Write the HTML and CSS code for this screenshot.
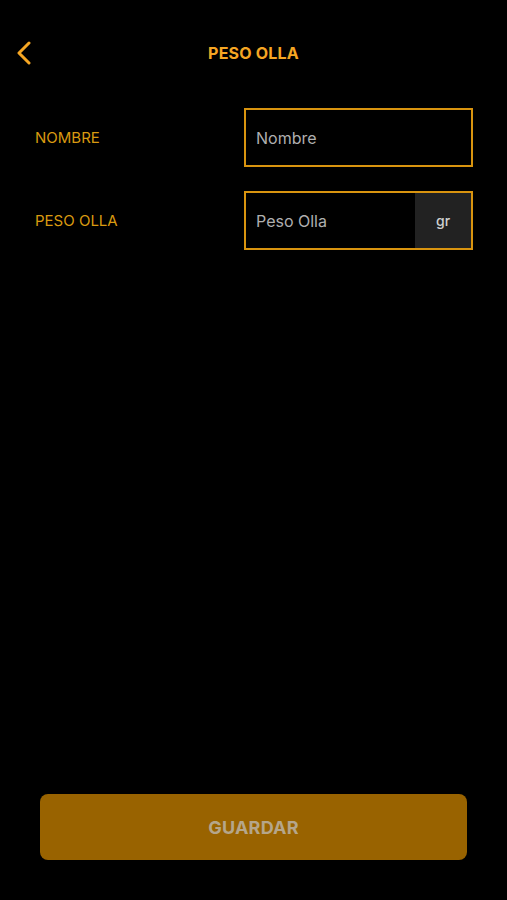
FILE: index.html
```html
<!DOCTYPE html>
<html lang="es">
    <head>
        <meta charset="utf-8" />
        <meta name="viewport" content="width=device-width" />
        <title>Peso Olla</title>
        <link rel="stylesheet" href="styles.css">
    </head>
    <body>
        <div class="screen">
            <div class="navbar">
                <a class="navBack" href="#">
                    <svg width="16" height="24" viewBox="0 0 16 24">
                        <path d="M13 2 L3 12 L13 22" fill="none" stroke="#F5A623" stroke-width="3" stroke-linecap="round" stroke-linejoin="round"/>
                    </svg>
                </a>
                <h1 class="navTitle">PESO OLLA</h1>
            </div>

            <div class="form">
                <div class="formRow">
                    <label class="formLabel" for="nombre">NOMBRE</label>
                    <div class="field">
                        <input class="fieldInput" type="text" id="nombre" placeholder="Nombre">
                    </div>
                </div>
                <div class="formRow">
                    <label class="formLabel" for="peso">PESO OLLA</label>
                    <div class="field">
                        <input class="fieldInput" type="text" id="peso" placeholder="Peso Olla">
                        <span class="fieldUnit">gr</span>
                    </div>
                </div>
            </div>

            <div class="footer">
                <button class="btnSave" disabled>GUARDAR</button>
            </div>
        </div>
    </body>
</html>
```

FILE: styles.css
```css
/* base */
body {
    margin:             0;
    background-color:   #000000;
    font-family:        Inter, "Liberation Sans", Arial, sans-serif;
    color:              #F5A623;
}
.screen {
    display:            flex;
    flex-direction:     column;
    height:             900px;
}

/* top bar */
.navbar {
    display:            flex;
    align-items:        center;
    justify-content:    center;
    height:             40px;
    margin-top:         33px;
    position:           relative;
}
.navBack {
    position:           absolute;
    left:               16px;
    top:                8px;
    display:            block;
    height:             24px;
}
.navTitle {
    margin:             0;
    font-size:          16px;
    font-weight:        700;
    color:              #F5A623;
    letter-spacing:     0.2px;
}

/* form */
.form {
    display:            flex;
    flex-direction:     column;
    gap:                24px;
    padding:            35px 34px 0 35px;
}
.formRow {
    display:            flex;
    align-items:        center;
    justify-content:    space-between;
}
.formLabel {
    font-size:          15px;
    color:              #D99A10;
}
.field {
    display:            flex;
    width:              229px;
    height:             59px;
    box-sizing:         border-box;
    border:             2px solid #D9940F;
}
.fieldInput {
    flex:               1;
    min-width:          0;
    border:             0;
    outline:            none;
    background:         transparent;
    padding:            0 0 0 10px;
    font-family:        inherit;
    font-size:          16px;
    color:              #AFAFAF;
}
.fieldInput::placeholder {
    color:              #AFAFAF;
}
.fieldUnit {
    display:            flex;
    align-items:        center;
    justify-content:    center;
    width:              56px;
    background-color:   #222222;
    color:              #D0D0D0;
    font-size:          14px;
    font-weight:        500;
}

/* footer */
.footer {
    margin-top:         auto;
    padding:            0 40px 40px 40px;
}
.btnSave {
    display:            block;
    width:              100%;
    height:             66px;
    border:             0;
    border-radius:      8px;
    background-color:   #996300;
    color:              #B5A68B;
    font-family:        inherit;
    font-size:          18px;
    font-weight:        700;
    letter-spacing:     0.2px;
}
```
